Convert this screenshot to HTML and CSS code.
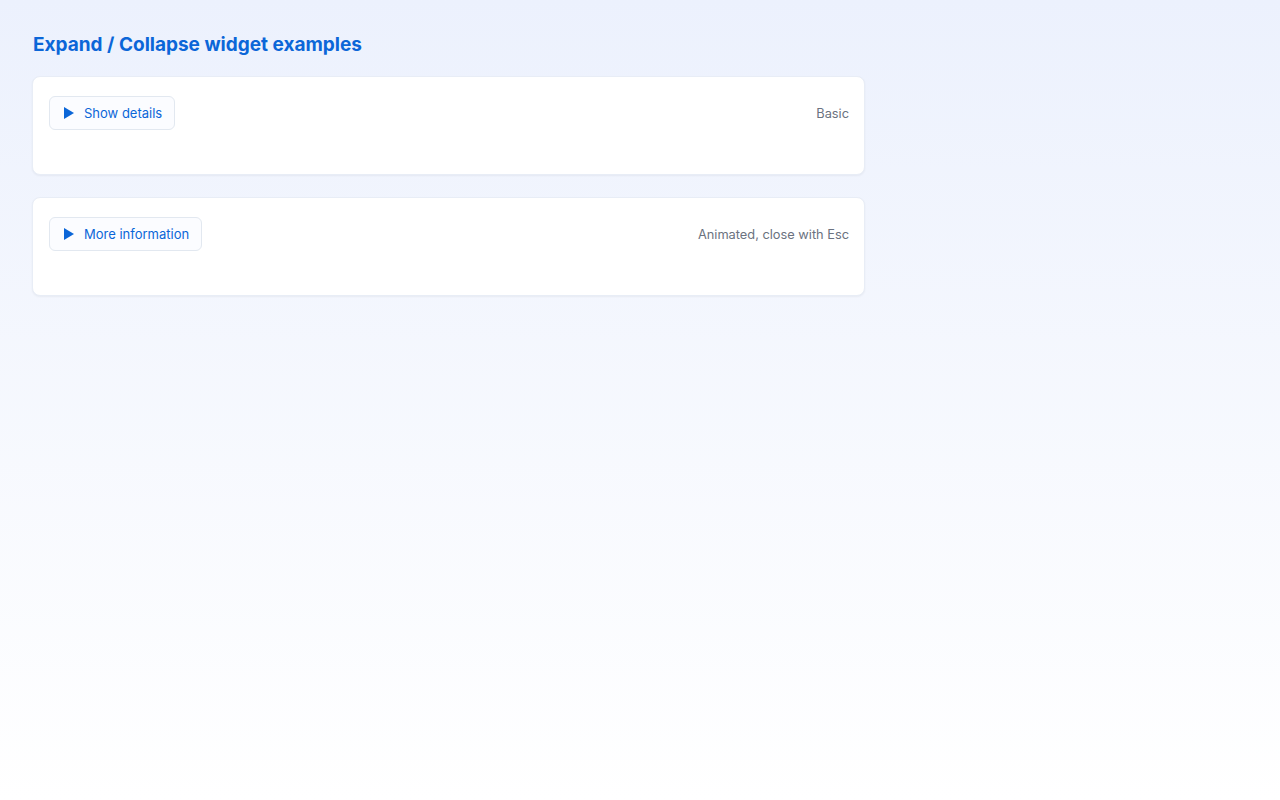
FILE: index.html
```html
<!DOCTYPE html>
<html lang="en">
<head>
<meta charset="utf-8">
<title>Expand / Collapse widget examples</title>
<link rel="stylesheet" href="styles.css">
</head>
<body>
<main class="page">
  <h1 class="title">Expand / Collapse widget examples</h1>
  <section class="card">
    <div class="card-head">
      <button class="toggle" type="button" aria-expanded="false">
        <svg class="caret" width="10" height="12" viewBox="0 0 10 12" aria-hidden="true"><path d="M0 0 L10 6 L0 12 Z" fill="currentColor"/></svg>
        <span>Show details</span>
      </button>
      <span class="note">Basic</span>
    </div>
    <div class="panel"></div>
  </section>
  <section class="card">
    <div class="card-head">
      <button class="toggle" type="button" aria-expanded="false">
        <svg class="caret" width="10" height="12" viewBox="0 0 10 12" aria-hidden="true"><path d="M0 0 L10 6 L0 12 Z" fill="currentColor"/></svg>
        <span>More information</span>
      </button>
      <span class="note">Animated, close with Esc</span>
    </div>
    <div class="panel"></div>
  </section>
</main>
</body>
</html>
```
FILE: styles.css
```css
* { box-sizing: border-box; }
html, body { margin: 0; height: 100%; }
body {
  font-family: Inter, "Noto Sans", sans-serif;
  background: linear-gradient(180deg, #ecf1fd 0%, #ffffff 100%);
  min-height: 800px;
  color: #1f2937;
}
.page {
  padding: 32px;
  width: 898px;
}
.title {
  margin: 1px 0 19px 1px;
  font-size: 19px;
  line-height: 24px;
  font-weight: 700;
  color: #0b66d8;
}
.card {
  width: 833px;
  background: #ffffff;
  border: 1px solid #e8edf6;
  border-radius: 8px;
  box-shadow: 0 1px 2px rgba(15, 23, 42, 0.05);
  padding: 19px 15px 19px 16px;
  margin-bottom: 22px;
}
.card-head {
  display: flex;
  align-items: center;
  justify-content: space-between;
}
.toggle {
  display: inline-flex;
  align-items: center;
  gap: 10px;
  height: 34px;
  padding: 0 12px 0 14px;
  border: 1px solid #e2e8f0;
  border-radius: 6px;
  background: #fbfcff;
  color: #0b66d8;
  font-family: inherit;
  font-size: 13px;
  cursor: pointer;
}
.caret { display: block; }
.note {
  font-size: 12.8px;
  color: #6b7280;
}
.panel { height: 25px; }
```
